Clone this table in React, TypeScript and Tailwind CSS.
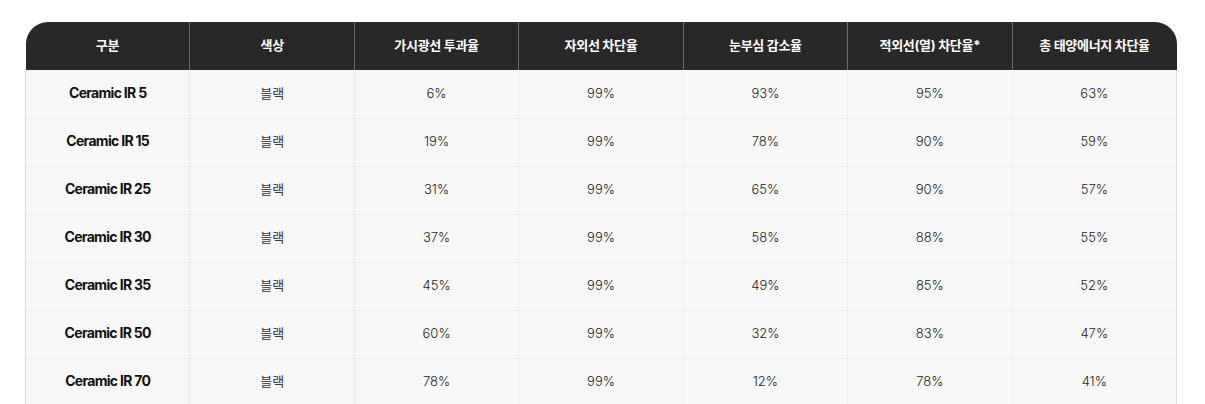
const headers = ['구분', '색상', '가시광선 투과율', '자외선 차단율', '눈부심 감소율', '적외선(열) 차단율*', '총 태양에너지 차단율'];

const rows = [
  ['Ceramic IR 5', '6%', '99%', '93%', '95%', '63%'],
  ['Ceramic IR 15', '19%', '99%', '78%', '90%', '59%'],
  ['Ceramic IR 25', '31%', '99%', '65%', '90%', '57%'],
  ['Ceramic IR 30', '37%', '99%', '58%', '88%', '55%'],
  ['Ceramic IR 35', '45%', '99%', '49%', '85%', '52%'],
  ['Ceramic IR 50', '60%', '99%', '32%', '83%', '47%'],
  ['Ceramic IR 70', '78%', '99%', '12%', '78%', '41%'],
];

export default function App() {
  return (
    <div
      className="w-[1205px] h-[404px] overflow-hidden bg-white pt-[22px] pl-[25px]"
      style={{ fontFamily: 'Inter, "Noto Sans CJK KR", sans-serif' }}
    >
      <table className="w-[1152px] table-fixed border-collapse text-[13px]">
        <thead>
          <tr className="h-[48px] bg-[#282828] text-white">
            {headers.map((h, i) => (
              <th
                key={h}
                className={`font-bold tracking-[-0.3px] ${i > 0 ? 'border-l border-[#6b6b6b]' : ''} ${
                  i === 0 ? 'rounded-tl-[22px]' : ''
                } ${i === headers.length - 1 ? 'rounded-tr-[22px]' : ''}`}
              >
                {h}
              </th>
            ))}
          </tr>
        </thead>
        <tbody>
          {rows.map((r) => (
            <tr key={r[0]} className="h-[48px] bg-[#f8f8f8] border-b border-[#ececec]">
              <td className="text-center text-[14px] leading-[18px] pb-[2px] font-bold text-[#111] tracking-[-0.7px] border-l border-[#dedede]">{r[0]}</td>
              <td className="text-center font-normal text-[#333] border-l border-[#ececec]">블랙</td>
              {r.slice(1).map((v, i) => (
                <td
                  key={i}
                  className={`text-center font-light text-[#222] border-l border-[#ececec] ${i === 4 ? 'border-r border-r-[#dedede]' : ''}`}
                >
                  {v}
                </td>
              ))}
            </tr>
          ))}
        </tbody>
      </table>
    </div>
  );
}
